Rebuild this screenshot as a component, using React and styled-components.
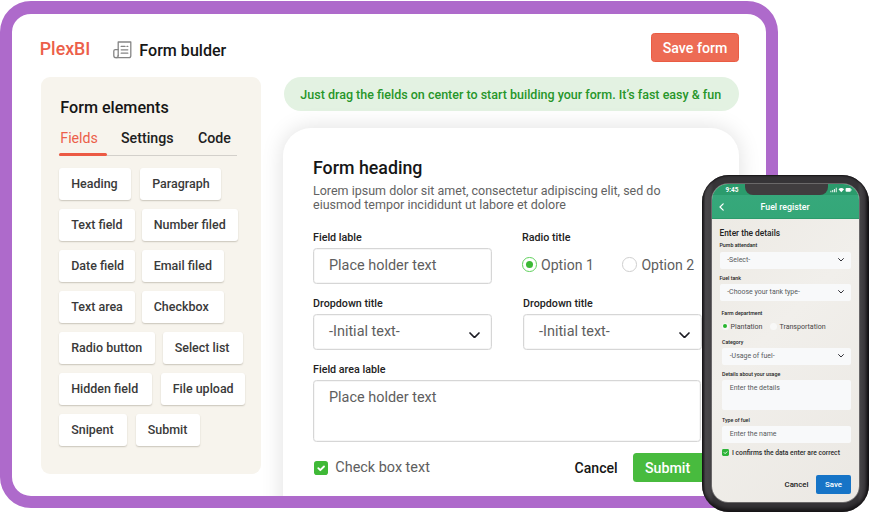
import React from "react";
import styled, { createGlobalStyle } from "styled-components";

const GlobalStyle = createGlobalStyle`
  *, *::before, *::after { box-sizing: border-box; }
  body { margin: 0; background: #fff; font-family: Roboto, "Liberation Sans", sans-serif; overflow: hidden; }
`;

const Stage = styled.main`
  position: relative;
  width: 869px;
  height: 512px;
  overflow: hidden;
  background: #fff;
`;

const Window = styled.section`
  width: 778px;
  height: 507px;
  margin-top: 1px;
  border: 12px solid #ae6acb;
  border-top-width: 13px;
  border-radius: 31px;
  background: #fff;
  overflow: hidden;
`;

const Header = styled.header`
  display: flex;
  align-items: center;
  height: 63px;
  padding: 4px 27px 0 27.8px;
`;

const Brand = styled.div`
  width: 73px;
  padding-top: 2px;
  font-size: 17.75px;
  line-height: 20px;
  font-weight: 500;
  color: #ec5f4a;
`;

const PageTitle = styled.h1`
  display: flex;
  align-items: center;
  gap: 7.5px;
  flex: 1;
  margin: 0;
  padding-top: 6px;
  font-size: 16.1px;
  line-height: 20px;
  font-weight: 500;
  color: #161616;

  svg { display: block; margin-top: -1.5px; }
`;

const SaveForm = styled.button`
  width: 88px;
  height: 29px;
  padding: 0;
  border: 1px solid #ea5c43;
  border-radius: 3.5px;
  background: #ed6b54;
  color: #fff;
  font: 500 14.2px/26px Roboto, sans-serif;
`;

const Body = styled.div`
  display: flex;
  align-items: flex-start;
  gap: 22px;
  padding-left: 29px;
`;

const Sidebar = styled.aside`
  width: 220px;
  height: 397px;
  padding: 21px 18px 0;
  border-radius: 9px;
  background: #f7f4ed;
`;

const SidebarTitle = styled.h2`
  margin: 0 0 0 1.3px;
  font-size: 16.15px;
  line-height: 20px;
  font-weight: 500;
  color: #161616;
`;

const Tabs = styled.nav`
  display: flex;
  width: 177.5px;
  height: 37.5px;
  padding-top: 9.5px;
  box-shadow: inset 0 -1px #d3d0cb;
`;

const Tab = styled.div`
  width: ${(p) => p.$width}px;
  height: 28px;
  padding-left: ${(p) => p.$inset}px;
  font-size: 14.2px;
  line-height: 20px;
  font-weight: ${(p) => (p.$active ? 400 : 500)};
  color: ${(p) => (p.$active ? "#ec5f4a" : "#202020")};

  &::after {
    content: "";
    display: ${(p) => (p.$active ? "block" : "none")};
    width: 47.5px;
    height: 3px;
    margin: 5px 0 0 -1.3px;
    border-radius: 1.5px;
    background: #ec5a44;
  }
`;

const ChipRows = styled.div`
  display: grid;
  gap: 9px;
  margin-top: 12.5px;
`;

const ChipRow = styled.div`
  display: flex;
  gap: ${(p) => p.$gap}px;
`;

const Chip = styled.div`
  flex: none;
  width: ${(p) => p.$width}px;
  height: 32px;
  padding-left: 12.2px;
  border-radius: 3px;
  background: #fff;
  box-shadow: 0 1px 1.5px rgba(60, 50, 30, 0.24);
  font-size: 12.48px;
  line-height: 32px;
  font-weight: 500;
  color: #3a3a3a;
  white-space: nowrap;
`;

const Center = styled.div`
  width: 456px;
`;

const Hint = styled.p`
  height: 34px;
  margin: 0 0 0 1px;
  padding-left: 16.3px;
  border-radius: 17px;
  background: #e3f2e2;
  color: #27962a;
  font-size: 12.5px;
  line-height: 35px;
  font-weight: 500;
  white-space: nowrap;
`;

const FormCard = styled.form`
  height: 400px;
  margin-top: 17px;
  padding: 29px 0 0 30px;
  border-radius: 28px 28px 0 0;
  background: #fff;
  box-shadow: 0 0 22px rgba(0, 0, 0, 0.13);
`;

const FormHeading = styled.h2`
  margin: 0;
  font-size: 17.8px;
  line-height: 21px;
  font-weight: 500;
  color: #161616;
`;

const Intro = styled.p`
  margin: 6px 0 17.5px;
  font-size: 12.5px;
  line-height: 14.3px;
  color: #626262;
  white-space: nowrap;
`;

const FieldGrid = styled.div`
  display: grid;
  grid-template-columns: 178px 178px;
  column-gap: 32px;
`;

const Field = styled.div`
  height: 66px;
  margin-left: ${(p) => p.$shift || 0}px;
`;

const Label = styled.div`
  height: 17.5px;
  font-size: 10.72px;
  line-height: 15px;
  font-weight: 500;
  color: #222;
`;

const Control = styled.div`
  display: flex;
  align-items: flex-start;
  justify-content: space-between;
  width: ${(p) => p.$width || 178.5}px;
  height: ${(p) => p.$height || 36}px;
  padding: 0 11px 0 15px;
  border: 1px solid #d6d6d6;
  border-radius: 3.5px;
  box-shadow: inset 0 0 0 0.5px #eee;
  font-size: 14.45px;
  line-height: 33.5px;
  color: #5e5e5e;

  svg { display: block; margin-top: 17px; }
`;

const Options = styled.div`
  display: flex;
  gap: 28.5px;
  padding-top: 7px;
`;

const Option = styled.div`
  display: flex;
  align-items: center;
  gap: 4.5px;
  flex: none;
  font-size: 14.1px;
  line-height: 20px;
  color: #5e5e5e;
  white-space: nowrap;
`;

const Radio = styled.span`
  display: grid;
  place-items: center;
  width: 14.5px;
  height: 14.5px;
  border: 1px solid ${(p) => (p.$on ? "#5fd05c" : "#cfcfcf")};
  border-radius: 50%;

  &::after {
    content: "";
    width: 7.5px;
    height: 7.5px;
    border-radius: 50%;
    background: ${(p) => (p.$on ? "#3cb935" : "transparent")};
  }
`;

const Footer = styled.div`
  display: flex;
  align-items: center;
  width: 391px;
  height: 29px;
  margin-top: 11px;
`;

const CheckLabel = styled.div`
  display: flex;
  align-items: center;
  gap: 7.3px;
  width: 261.5px;
  flex: none;
  padding-left: 1px;
  font-size: 14.43px;
  color: #5e5e5e;
`;

const CancelLink = styled.span`
  width: 58.5px;
  flex: none;
  font-size: 14.1px;
  font-weight: 500;
  color: #161616;
`;

const SubmitButton = styled.button`
  width: 72px;
  height: 29px;
  flex: none;
  padding: 0 0 0 12px;
  border: 0;
  border-radius: 3.5px;
  background: #48bb3e;
  color: #fff;
  font: 500 14.2px/28px Roboto, sans-serif;
  text-align: left;
`;

const Phone = styled.section`
  position: absolute;
  left: 702px;
  top: 175px;
  width: 166.5px;
  height: 336.5px;
  padding: 8.5px 9.5px 10px 10px;
  border-radius: 27px;
  background: linear-gradient(90deg, #19171a 0, #4a484b 2%, #454346 5%, #363437 7%, #363437 93%, #454346 95%, #39363a 97.5%, #100f11 100%);
  box-shadow: inset 0 1px 1.5px #171517, inset 0 -3px 4px #131113;
`;

const Screen = styled.div`
  height: 318px;
  border-radius: 16px;
  overflow: hidden;
  background: linear-gradient(135deg, #ece9e3 0%, #f1efeb 45%, #ebe8e3 100%);
  box-shadow: 0 0 0 0.7px #7c7a7b;
`;

const PhoneTop = styled.div`
  height: 35px;
  background: linear-gradient(#2b9b6c 0, #2b9b6c 11px, #36a87b 11.5px, #34a778 34px, #248f60 35px);
`;

const StatusBar = styled.div`
  display: grid;
  grid-template-columns: 33px 82.5px 31.5px;
  height: 11px;
  color: #fff;
`;

const Clock = styled.span`
  padding-left: 13.5px;
  font-size: 6.4px;
  line-height: 13px;
  font-weight: 700;
`;

const Notch = styled.div`
  height: 11px;
  background: #403d3f;
  border-radius: 0 0 8px 8px;
`;

const StatusIcons = styled.div`
  padding: 3.5px 0 0 2.5px;
  svg { display: block; }
`;

const NavBar = styled.div`
  display: grid;
  grid-template-columns: 40px auto;
  align-items: center;
  height: 24px;
  padding: 0 0 0 7px;
  color: #fff;
  font-size: 8.8px;
  line-height: 24px;
  font-weight: 500;
  white-space: nowrap;

  svg { display: block; }
  span { padding-left: 1.5px; }
`;

const PhoneBody = styled.div`
  display: flex;
  flex-direction: column;
  padding: 9px 8px 0 10px;
`;

const PhoneTitle = styled.h3`
  margin: 0 0 3.5px -2.5px;
  font-size: 8.35px;
  line-height: 11px;
  font-weight: 500;
  color: #222;
`;

const PhoneField = styled.div`
  height: ${(p) => p.$height}px;
  margin-left: ${(p) => p.$shift || 0}px;
`;

const PhoneLabel = styled.div`
  height: ${(p) => p.$height || 9}px;
  font-size: 5.27px;
  line-height: 7px;
  font-weight: 500;
  color: #252525;
  white-space: nowrap;
`;

const PhoneControl = styled.div`
  display: flex;
  justify-content: space-between;
  height: ${(p) => p.$height || 17}px;
  padding: 0 7px 0 7.7px;
  border-radius: 2px;
  background: #f8f9fa;
  color: #57595c;
  font-size: 6.97px;
  line-height: 16.5px;
  white-space: nowrap;

  svg { display: block; margin-top: 6.8px; }
`;

const PhoneOptions = styled.div`
  display: flex;
  align-items: center;
  height: 9px;
  margin-top: 3px;
  font-size: 7.06px;
  line-height: 9px;
  color: #454545;
`;

const PhoneRadio = styled.i`
  display: grid;
  place-items: center;
  width: 7px;
  height: 7px;
  margin: 0 2px 0 ${(p) => p.$before}px;
  border-radius: 50%;
  background: #f8f8f7;

  &::after {
    content: "";
    width: 4px;
    height: 4px;
    border-radius: 50%;
    background: ${(p) => (p.$on ? "#27b52d" : "transparent")};
  }
`;

const PhoneCheck = styled.div`
  display: flex;
  align-items: center;
  gap: 3px;
  height: 8px;
  font-size: 6.73px;
  font-weight: 500;
  color: #2b2b2b;
  white-space: nowrap;
`;

const PhoneFooter = styled.div`
  display: flex;
  align-items: center;
  justify-content: flex-end;
  gap: 7.5px;
  height: 19px;
  margin-top: 18px;
  font-size: 7.84px;
  font-weight: 500;
  color: #222;
`;

const PhoneSave = styled.button`
  width: 35px;
  height: 19px;
  padding: 0;
  border: 0;
  border-radius: 2px;
  background: #1674c7;
  color: #fff;
  font: 500 7.86px/19px Roboto, sans-serif;
`;

const NewsIcon = () => (
  <svg width="19" height="18" viewBox="0 0 19 18" fill="none" stroke="#858585" strokeWidth="1.3" strokeLinejoin="round" strokeLinecap="round">
    <path d="M5.2 14.5V1h12.6v13.8a1.9 1.9 0 0 1-1.9 1.9H3.1" />
    <path d="M5.2 8.6H2.3A1.5 1.5 0 0 0 .8 10v4.4a2.2 2.2 0 0 0 4.4 0" />
    <path d="M8.2 5.4h3.8M8.2 8.8h6.6M8.2 12.2h6.6M14 5.4h.8" />
  </svg>
);

const Chevron = ({ width = 11 }) => (
  <svg width={width} height={width * 0.6} viewBox="0 0 11 6.6" fill="none" stroke="#1d1d25" strokeWidth="1.7" strokeLinecap="round" strokeLinejoin="round">
    <path d="M1 1l4.5 4.5L10 1" />
  </svg>
);

const CheckMark = ({ size, color = "#3fb937" }) => (
  <svg width={size} height={size} viewBox="0 0 14 14" fill="none">
    <rect width="14" height="14" rx="2.8" fill={color} />
    <path d="M4.3 7.2l2 2 3.700-3.700" stroke="#fff" strokeWidth="1.9" strokeLinecap="round" strokeLinejoin="round" />
  </svg>
);

const BackArrow = () => (
  <svg width="5" height="8" viewBox="0 0 5 8" fill="none" stroke="#fff" strokeWidth="1.2" strokeLinecap="round" strokeLinejoin="round">
    <path d="M4.2.8L1 4l3.2 3.2" />
  </svg>
);

const SignalIcons = () => (
  <svg width="22" height="6" viewBox="0 0 22 6" fill="#fff">
    <path d="M.3 3.8h1.100v1.400H.3zM2.100 3h1.100v2.200H2.100zM3.900 1.900H5v3.300H3.900zM5.700.8h1.100v4.400H5.700z" opacity=".85" />
    <path d="M11.3 5.300L8.500 2.200C10.100.5 12.500.5 14.100 2.200z" />
    <rect x="15.6" y="1.1" width="5.2" height="3.6" rx=".9" />
    <path d="M21.1 2.2h.6v1.4h-.6z" />
  </svg>
);

const CHIPS = [
  { gap: 9, items: [["Heading", 72], ["Paragraph", 81]] },
  { gap: 7, items: [["Text field", 75.5], ["Number filed", 96.5]] },
  { gap: 7, items: [["Date field", 75.5], ["Email filed", 82]] },
  { gap: 7, items: [["Text area", 75.5], ["Checkbox", 82]] },
  { gap: 8, items: [["Radio button", 95.5], ["Select list", 80.5]] },
  { gap: 8.5, items: [["Hidden field", 93], ["File upload", 84]] },
  { gap: 8.5, items: [["Snipent", 68], ["Submit", 64.5]] },
];

const Dropdown = ({ title }) => (
  <Field>
    <Label>{title}</Label>
    <Control>-Initial text-<Chevron /></Control>
  </Field>
);

export default function App() {
  return (
    <Stage>
      <GlobalStyle />
      <Window>
        <Header>
          <Brand>PlexBI</Brand>
          <PageTitle><NewsIcon />Form bulder</PageTitle>
          <SaveForm type="button">Save form</SaveForm>
        </Header>
        <Body>
          <Sidebar>
            <SidebarTitle>Form elements</SidebarTitle>
            <Tabs>
              <Tab $active $width={62} $inset={1.3}>Fields</Tab>
              <Tab $width={77} $inset={0}>Settings</Tab>
              <Tab $width={38} $inset={0}>Code</Tab>
            </Tabs>
            <ChipRows>
              {CHIPS.map((row) => (
                <ChipRow key={row.items[0][0]} $gap={row.gap}>
                  {row.items.map(([name, width]) => <Chip key={name} $width={width}>{name}</Chip>)}
                </ChipRow>
              ))}
            </ChipRows>
          </Sidebar>
          <Center>
            <Hint>Just drag the fields on center to start building your form. It’s fast easy &amp; fun</Hint>
            <FormCard>
              <FormHeading>Form heading</FormHeading>
              <Intro>
                Lorem ipsum dolor sit amet, consectetur adipiscing elit, sed do<br />
                eiusmod tempor incididunt ut labore et dolore
              </Intro>
              <FieldGrid>
                <Field>
                  <Label>Field lable</Label>
                  <Control>Place holder text</Control>
                </Field>
                <Field $shift={-1}>
                  <Label>Radio title</Label>
                  <Options>
                    <Option><Radio $on />Option 1</Option>
                    <Option><Radio />Option 2</Option>
                  </Options>
                </Field>
                <Dropdown title="Dropdown title" />
                <Dropdown title="Dropdown title" />
              </FieldGrid>
              <Label>Field area lable</Label>
              <Control $width={388} $height={62.5}>Place holder text</Control>
              <Footer>
                <CheckLabel><CheckMark size={14} />Check box text</CheckLabel>
                <CancelLink>Cancel</CancelLink>
                <SubmitButton type="button">Submit</SubmitButton>
              </Footer>
            </FormCard>
          </Center>
        </Body>
      </Window>

      <Phone>
        <Screen>
          <PhoneTop>
            <StatusBar>
              <Clock>9:45</Clock>
              <Notch />
              <StatusIcons><SignalIcons /></StatusIcons>
            </StatusBar>
            <NavBar><BackArrow /><span>Fuel register</span></NavBar>
          </PhoneTop>
          <PhoneBody>
            <PhoneTitle>Enter the details</PhoneTitle>
            <PhoneField $height={32.5} $shift={-2.5}>
              <PhoneLabel $height={9.5}>Pumb attendant</PhoneLabel>
              <PhoneControl>-Select-<Chevron width={6} /></PhoneControl>
            </PhoneField>
            <PhoneField $height={35} $shift={-2.5}>
              <PhoneLabel>Fuel tank</PhoneLabel>
              <PhoneControl>-Choose your tank type-<Chevron width={6} /></PhoneControl>
            </PhoneField>
            <PhoneField $height={29} $shift={-0.5}>
              <PhoneLabel>Farm department</PhoneLabel>
              <PhoneOptions>
                <PhoneRadio $on $before={0} />Plantation
                <PhoneRadio $before={8} />Transportation
              </PhoneOptions>
            </PhoneField>
            <PhoneField $height={32.5}>
              <PhoneLabel>Category</PhoneLabel>
              <PhoneControl>-Usage of fuel-<Chevron width={6} /></PhoneControl>
            </PhoneField>
            <PhoneField $height={45.5}>
              <PhoneLabel>Details about your usage</PhoneLabel>
              <PhoneControl $height={30}>Enter the details</PhoneControl>
            </PhoneField>
            <PhoneField $height={32}>
              <PhoneLabel>Type of fuel</PhoneLabel>
              <PhoneControl>Enter the name</PhoneControl>
            </PhoneField>
            <PhoneCheck><CheckMark size={7} color="#2fb43a" />I confirms the data enter are correct</PhoneCheck>
            <PhoneFooter><span>Cancel</span><PhoneSave type="button">Save</PhoneSave></PhoneFooter>
          </PhoneBody>
        </Screen>
      </Phone>
    </Stage>
  );
}
